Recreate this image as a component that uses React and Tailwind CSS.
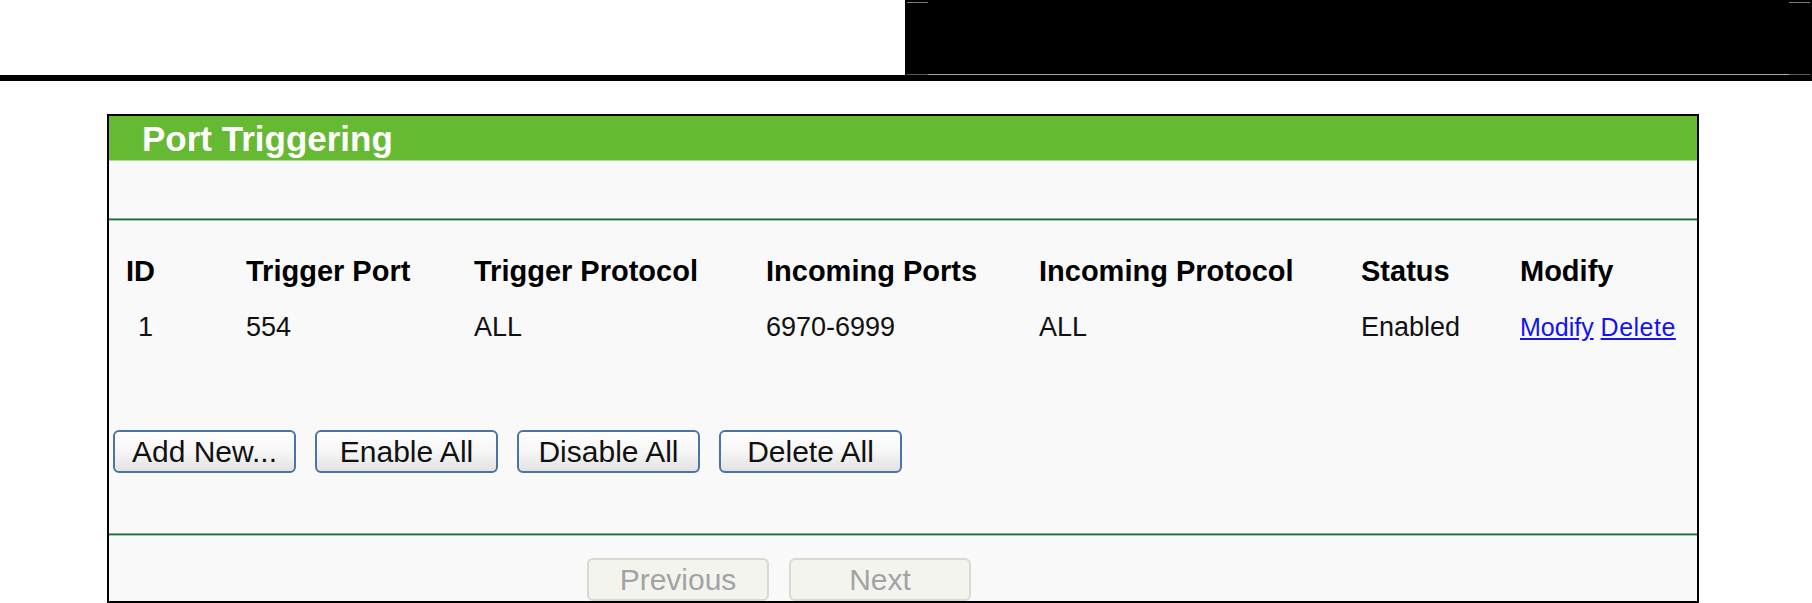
import React from "react";

const SANS = "font-['Liberation_Sans',Arial,sans-serif]";

function GreenLine() {
  return (
    <div className="flex flex-col">
      <div className="h-[1px] bg-[#7fb38e]" />
      <div className="h-[1px] bg-[#1f6a3c]" />
      <div className="h-[1px] bg-[#a6cbb0]" />
    </div>
  );
}

function Btn({ children }) {
  return (
    <button className="w-[183px] h-[43px] rounded-[6px] border-2 border-[#4a74a6] bg-linear-to-b from-white via-[#f6f6f6] to-[#e2e2e2] text-[30px] leading-none text-[#111] flex items-center justify-center">
      {children}
    </button>
  );
}

function DisabledBtn({ children }) {
  return (
    <button className="w-[182px] h-[43px] rounded-[6px] border-2 border-[#d9d9cf] bg-[#f4f4ef] text-[30px] leading-none text-[#a3a3a3] flex items-center justify-center">
      {children}
    </button>
  );
}

export default function App() {
  const cols = "grid grid-cols-[120px_228px_292px_273px_322px_159px_1fr] items-center pl-[17px]";
  return (
    <div className={`w-[1812px] h-[603px] overflow-hidden bg-white ${SANS}`}>
      {/* top strip */}
      <div className="flex h-[75px]">
        <div className="w-[905px] bg-white" />
        <div className="flex-1 bg-black flex flex-col justify-between px-[2px] pt-[2px]">
          <div className="flex justify-between">
            <div className="w-[21px] h-[1px] bg-[#7c7c7c]" />
            <div className="w-[21px] h-[1px] bg-[#7c7c7c]" />
          </div>
          <div className="flex h-[1px]">
            <div className="w-[21px] bg-[#5a5a5a]" />
            <div className="flex-1 bg-[#a9a9a9]" />
            <div className="w-[21px] bg-[#5a5a5a]" />
          </div>
        </div>
      </div>
      <div className="h-[6px] bg-black" />

      {/* panel */}
      <div className="mt-[33px] ml-[107px] w-[1592px] h-[489px] border-2 border-black bg-[#f9f9f9] overflow-hidden flex flex-col">
        <div className="h-[44px] bg-[#66b933] pl-[33px] pt-[5px] shrink-0 overflow-hidden">
          <div className="font-bold text-[35px] leading-[35px] text-white">
            Port Triggering
          </div>
        </div>
        <div className="h-[1px] bg-[#b4db98] shrink-0" />
        <div className="h-[57px] shrink-0" />
        <GreenLine />

        {/* table body */}
        <div className="h-[312px] shrink-0 pt-[22px] flex flex-col">
          <div className={`${cols} h-[56px] text-[29px] font-bold leading-none text-black`}>
            <div>ID</div>
            <div>Trigger Port</div>
            <div>Trigger Protocol</div>
            <div>Incoming Ports</div>
            <div>Incoming Protocol</div>
            <div>Status</div>
            <div>Modify</div>
          </div>
          <div className={`${cols} h-[56px] text-[27px] leading-none text-[#111]`}>
            <div className="pl-[12px]">1</div>
            <div>554</div>
            <div>ALL</div>
            <div>6970-6999</div>
            <div>ALL</div>
            <div>Enabled</div>
            <div className="whitespace-nowrap text-[25px]">
              <a href="#" className="text-[#1212f5] underline">Modify</a>{" "}
              <a href="#" className="text-[#1212f5] underline tracking-[0.5px]">Delete</a>
            </div>
          </div>
          <div className="mt-[75px] pl-[4px] flex gap-[19px]">
            <Btn>Add New...</Btn>
            <Btn>Enable All</Btn>
            <Btn>Disable All</Btn>
            <Btn>Delete All</Btn>
          </div>
        </div>

        <GreenLine />

        {/* footer */}
        <div className="pt-[22px] pl-[478px] flex gap-[20px]">
          <DisabledBtn>Previous</DisabledBtn>
          <DisabledBtn>Next</DisabledBtn>
        </div>
      </div>
    </div>
  );
}
